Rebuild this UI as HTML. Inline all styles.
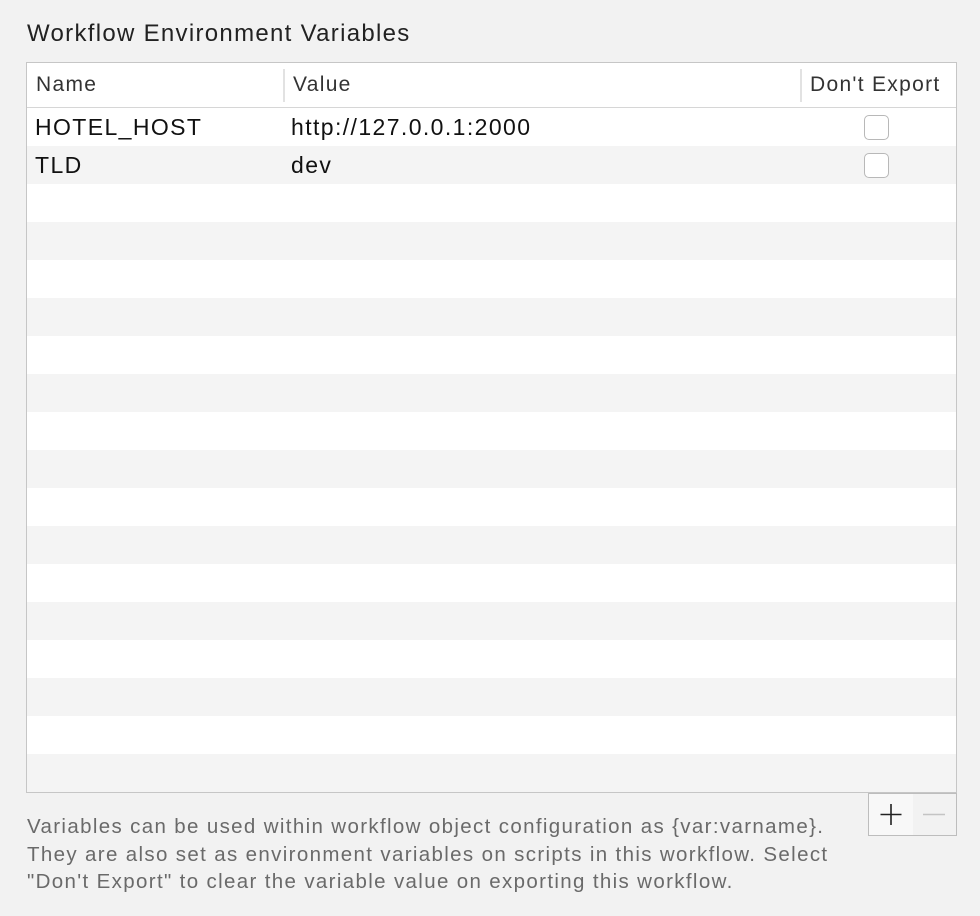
<!DOCTYPE html>
<html><head><style>
body{margin:0;width:980px;height:916px;background:#f2f2f2;font-family:"Liberation Sans",sans-serif;position:relative;overflow:hidden}
.t{position:absolute;left:27px;top:20px;font-size:24px;letter-spacing:1.3px;color:#222}
.box{position:absolute;left:26px;top:62px;width:929px;height:729px;border:1px solid #c6c6c6;background:#fff;overflow:hidden}
.hd{height:44px;border-bottom:1px solid #d6d6d6;position:relative;font-size:21px;letter-spacing:1.3px;color:#333}
.hd span{position:absolute;top:10px}
.sep{position:absolute;top:6px;width:2px;height:33px;background:#e2e2e2}
.row{height:38px;position:relative;font-size:23px;letter-spacing:1.4px;color:#111}
.row span{position:absolute;top:6px}
.cb{position:absolute;left:837px;top:7px;width:25px;height:25px;border:1px solid #b8b8b8;border-radius:5px;background:#fff;box-sizing:border-box}
.ft{position:absolute;left:27px;top:813px;font-size:20.5px;letter-spacing:1.35px;line-height:27.5px;color:#6a6a6a;white-space:nowrap}
.btn{position:absolute;top:793px;height:43px;border:1px solid #bdbdbd;box-sizing:border-box}
#rows .row:nth-child(odd){background:#fff}#rows .row:nth-child(even){background:#f4f4f4}
</style></head><body>
<div class="t">Workflow Environment Variables</div>
<div class="box">
<div class="hd"><span style="left:9px">Name</span><div class="sep" style="left:256px"></div><span style="left:266px">Value</span><div class="sep" style="left:773px"></div><span style="left:783px">Don't Export</span></div>
<div id="rows">
<div class="row"><span style="left:8px">HOTEL_HOST</span><span style="left:264px">http://127.0.0.1:2000</span><div class="cb"></div></div>
<div class="row"><span style="left:8px">TLD</span><span style="left:264px">dev</span><div class="cb"></div></div>
<div class="row"></div><div class="row"></div><div class="row"></div><div class="row"></div><div class="row"></div><div class="row"></div><div class="row"></div><div class="row"></div><div class="row"></div><div class="row"></div><div class="row"></div><div class="row"></div><div class="row"></div><div class="row"></div><div class="row"></div><div class="row"></div>
</div>
</div>
<div class="btn" style="left:868px;width:46px;background:#f8f8f8"><svg width="44" height="41" style="position:absolute;left:0;top:0"><path d="M22 10V31M11.5 20.5H32.5" stroke="#222" stroke-width="1.6"/></svg></div>
<div class="btn" style="left:913px;width:44px;border-left:none;background:#f2f2f2"><svg width="43" height="41" style="position:absolute;left:0;top:0"><path d="M10 20.5H32" stroke="#c4c4c4" stroke-width="1.6"/></svg></div>
<div class="ft">Variables can be used within workflow object configuration as {var:varname}.<br>They are also set as environment variables on scripts in this workflow. Select<br>"Don't Export" to clear the variable value on exporting this workflow.</div>
</body></html>
